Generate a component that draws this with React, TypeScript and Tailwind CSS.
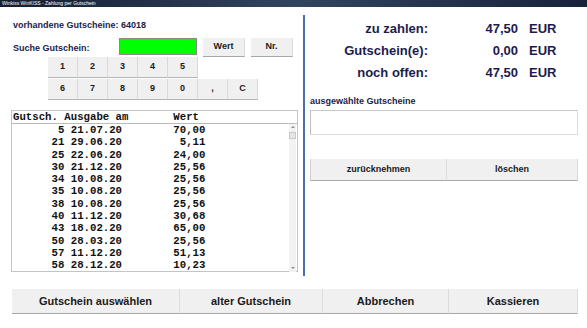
const ROWS: [string, string, string][] = [
  ["5", "21.07.20", "70,00"],
  ["21", "29.06.20", "5,11"],
  ["25", "22.06.20", "24,00"],
  ["30", "21.12.20", "25,56"],
  ["34", "10.08.20", "25,56"],
  ["35", "10.08.20", "25,56"],
  ["38", "10.08.20", "25,56"],
  ["40", "11.12.20", "30,68"],
  ["43", "18.02.20", "65,00"],
  ["50", "28.03.20", "25,56"],
  ["57", "11.12.20", "51,13"],
  ["58", "28.12.20", "10,23"],
];

const SUMS = [
  ["zu zahlen:", "47,50"],
  ["Gutschein(e):", "0,00"],
  ["noch offen:", "47,50"],
];

function Key({ label }: { label: string }) {
  return (
    <div className="flex h-[21px] w-[30px] items-center justify-center border-b border-r border-b-[#b4b4b4] border-r-[#d9d9d9] bg-[#f0f0f0] text-[9px] font-bold text-[#1a1a1a]">
      {label}
    </div>
  );
}

function Btn({ label, className }: { label: string; className: string }) {
  return (
    <div className={`flex items-center justify-center border-b border-r border-b-[#a8a8a8] border-r-[#dcdcdc] bg-[#f0f0f0] font-bold text-[#1a1a1a] ${className}`}>
      {label}
    </div>
  );
}

export default function App() {
  return (
    <div className="relative h-[328px] w-[587px] overflow-hidden bg-white font-['Liberation_Sans',Arial,sans-serif]">
      <div className="flex h-[7px] items-center bg-gradient-to-r from-[#141e30] via-[#33445f] to-[#18233a] pl-[2px] text-[5px] leading-[7px] text-white">
        Winkiss WinKISS - Zahlung per Gutschein
      </div>

      <div className="flex h-[269px]">
        {/* left side */}
        <div className="w-[303px] pl-[11px]">
          <div className="pl-[2px] pt-[13px] text-[9px] font-bold leading-[11px] text-[#1c1c4c]">
            vorhandene Gutscheine: 64018
          </div>
          <div className="mt-[7px] flex h-[19px] items-start">
            <div className="w-[108px] self-center pl-[2px] pt-[1px] text-[9px] font-bold leading-[11px] text-[#1c1c4c]">
              Suche Gutschein:
            </div>
            <div className="h-[17px] w-[78px] border border-[#8a8a8a] bg-[#00ff00]" />
            <Btn label="Wert" className="ml-[6px] h-[19px] w-[42px] text-[9px]" />
            <Btn label="Nr." className="ml-[6px] h-[19px] w-[42px] text-[9px]" />
          </div>
          <div className="ml-[37px] flex flex-col">
            <div className="flex">
              {["1", "2", "3", "4", "5"].map((k) => (
                <Key key={k} label={k} />
              ))}
            </div>
            <div className="flex pt-[1px]">
              {["6", "7", "8", "9", "0", ",", "C"].map((k) => (
                <Key key={k} label={k} />
              ))}
            </div>
          </div>

          <div className="mt-[10px] flex h-[162px] w-[287px] flex-col border border-[#c4c4c4] font-['Liberation_Mono','Courier_New',monospace] text-[10.7px] font-bold text-[#111]">
            <div className="h-[13px] whitespace-pre border-b border-[#bcbcbc] pl-[1px] leading-[12px]">
              {"Gutsch. Ausgabe am       Wert"}
            </div>
            <div className="flex flex-1">
              <div className="flex-1 pl-[1px]">
                {ROWS.map(([n, d, v]) => (
                  <div key={n} className="h-[12.3px] whitespace-pre leading-[12.3px]">
                    {`${n.padStart(8)} ${d}        ${v.padStart(5)}`}
                  </div>
                ))}
              </div>
              <div className="relative mr-[1px] w-[7px] bg-[#f2f2f2]">
                <div className="absolute left-[2px] top-[2px] h-0 w-0 border-x-[2px] border-b-[2px] border-x-transparent border-b-[#8c8c8c]" />
                <div className="absolute left-0 top-[8px] h-[7px] w-[7px] border border-[#c8c8c8] bg-[#e6e6e6]" />
                <div className="absolute bottom-[3px] left-[2px] h-0 w-0 border-x-[2px] border-t-[2px] border-x-transparent border-t-[#8c8c8c]" />
              </div>
            </div>
          </div>
        </div>

        <div className="mt-[8px] w-[2px] bg-[#4a6ea8]" />

        {/* right side */}
        <div className="flex-1">
          <div className="mt-[11px]">
            {SUMS.map(([l, v]) => (
              <div key={l} className="flex h-[22px] items-center text-[13px] font-bold text-[#1c1c4c]">
                <div className="w-[123px] text-right">{l}</div>
                <div className="w-[90px] text-right">{v}</div>
                <div className="ml-[11px]">EUR</div>
              </div>
            ))}
          </div>
          <div className="ml-[5px] mt-[12px] text-[9px] font-bold leading-[11px] text-[#1c1c4c]">
            ausgewählte Gutscheine
          </div>
          <div className="ml-[5px] mt-[3px] h-[25px] w-[268px] border border-[#dcdcdc] border-l-[#bdbdbd] border-t-[#c8c8c8]" />
          <div className="ml-[5px] mt-[24px] flex w-[268px]">
            <Btn label="zurücknehmen" className="h-[22px] w-[137px] border-l border-l-[#d0d0d0] text-[9px]" />
            <Btn label="löschen" className="h-[22px] flex-1 border-r-[#b0b0b0] text-[9px]" />
          </div>
        </div>
      </div>

      <div className="ml-[12px] mt-[13px] flex w-[566px]">
        <Btn label="Gutschein auswählen" className="h-[25px] w-[168px] text-[11px]" />
        <Btn label="alter Gutschein" className="h-[25px] w-[143px] text-[11px]" />
        <Btn label="Abbrechen" className="h-[25px] w-[126px] text-[11px]" />
        <Btn label="Kassieren" className="h-[25px] flex-1 border-r-[#b8b8b8] text-[11px]" />
      </div>
    </div>
  );
}
